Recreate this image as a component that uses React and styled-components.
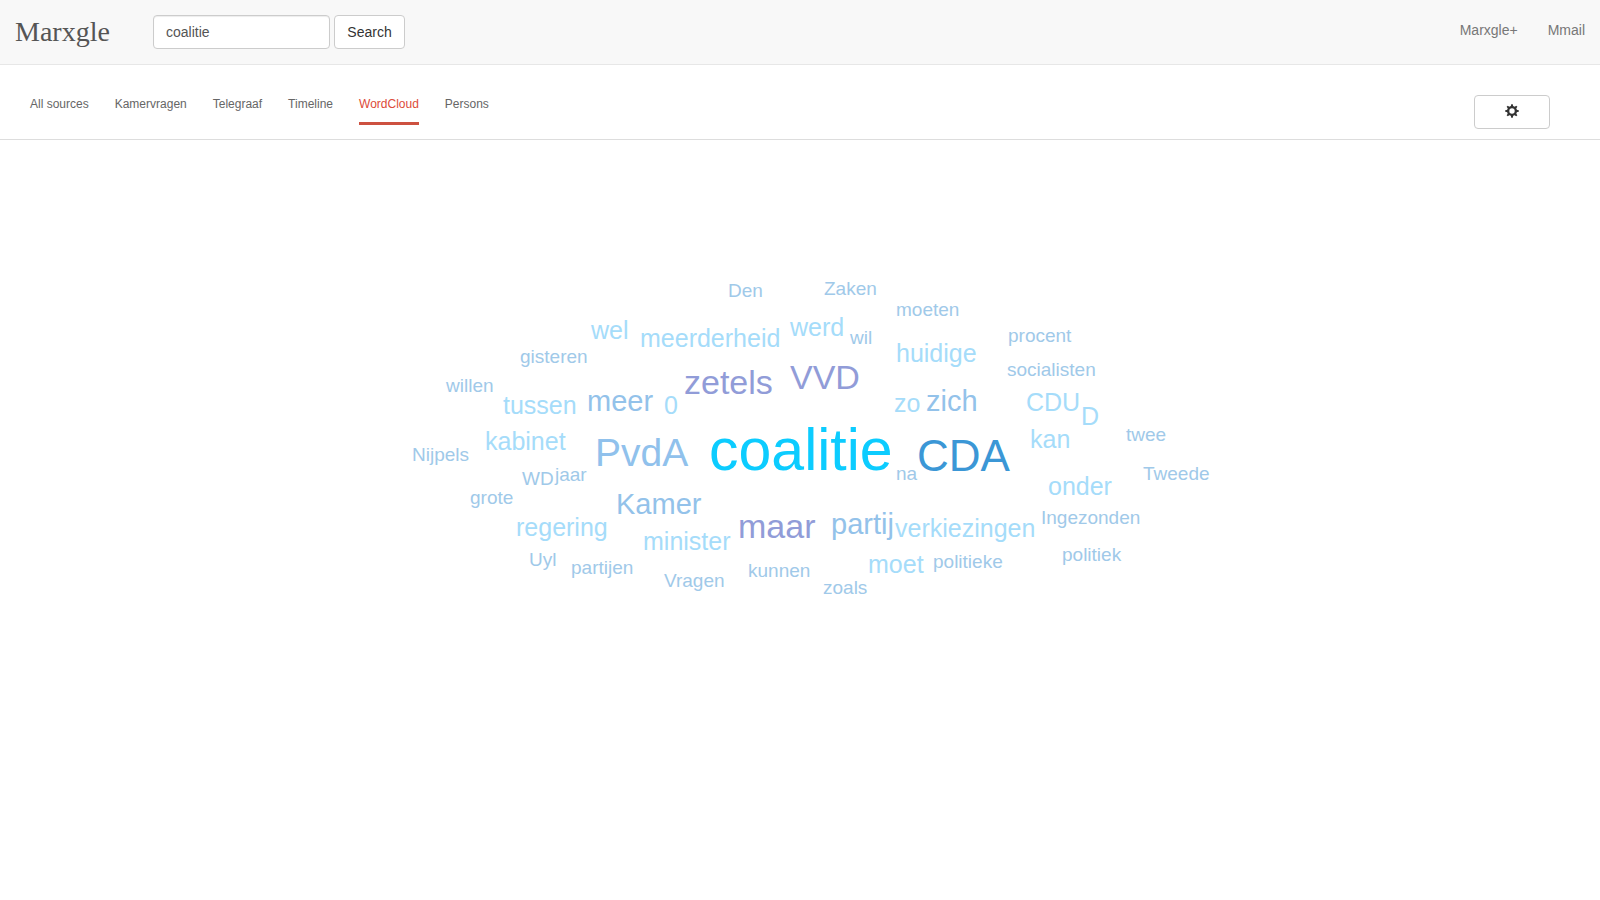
import React from "react";
import styled, { createGlobalStyle } from "styled-components";

const GlobalStyle = createGlobalStyle`
  *, *::before, *::after { box-sizing: border-box; }
  body {
    margin: 0;
    background: #fff;
    color: #333;
    font: 14px/20px "Liberation Sans", Arial, sans-serif;
  }
`;

const Navbar = styled.header`
  display: flex;
  align-items: center;
  height: 65px;
  padding: 0 15px;
  background: #f8f8f8;
  border-bottom: 1px solid #e7e7e7;
`;

const Brand = styled.a`
  width: 138px;
  font: 28px/32px "Liberation Serif", "Times New Roman", serif;
  color: #555;
  text-decoration: none;
`;

const SearchForm = styled.form`
  display: flex;
  gap: 4px;
`;

const SearchInput = styled.input`
  width: 177px;
  height: 34px;
  padding: 6px 12px;
  font: inherit;
  color: #555;
  background: #fff;
  border: 1px solid #ccc;
  border-radius: 4px;
  box-shadow: inset 0 1px 1px rgba(0, 0, 0, 0.075);
`;

const Button = styled.button`
  display: flex;
  align-items: center;
  justify-content: center;
  height: 34px;
  min-width: ${(p) => (p.$wide ? "76px" : "71px")};
  padding: 6px 12px;
  font: inherit;
  color: #333;
  background: #fff;
  border: 1px solid #ccc;
  border-radius: 4px;
  cursor: pointer;
`;

const AppLinks = styled.nav`
  display: flex;
  gap: 30px;
  margin-left: auto;
  padding-bottom: 4px;
`;

const AppLink = styled.a`
  color: #777;
  text-decoration: none;
`;

const Toolbar = styled.div`
  display: flex;
  align-items: flex-start;
  justify-content: space-between;
  height: 75px;
  padding: 30px 50px 0 30px;
  border-bottom: 1px solid #ddd;
`;

const Tabs = styled.nav`
  display: flex;
  gap: 26px;
`;

const Tab = styled.a`
  height: 30px;
  padding-top: 1px;
  font-size: 12px;
  line-height: 16px;
  color: ${(p) => (p.$active ? "#dd4b39" : "#666")};
  border-bottom: 3px solid ${(p) => (p.$active ? "#cd5140" : "transparent")};
  text-decoration: none;
`;

const Stage = styled.main`
  display: flex;
  justify-content: center;
  padding: 130px 0;
`;

const Cloud = styled.div`
  position: relative;
  flex: none;
  width: 840px;
  height: 340px;
`;

const levels = {
  1: { size: 19, ascent: 16, color: "#a0c9e9" },
  2: { size: 25, ascent: 21, color: "#a5dcfa" },
  3: { size: 29, ascent: 24, color: "#93c2ea" },
  4: { size: 34, ascent: 29, color: "#919cd8" },
  5: { size: 39, ascent: 33, color: "#90c1ec" },
  6: { size: 44, ascent: 37, color: "#3b97d6" },
  7: { size: 59, ascent: 49, color: "#0cccff" },
};

const Word = styled.span`
  position: absolute;
  font-size: ${(p) => levels[p.$level].size}px;
  line-height: 1;
  white-space: nowrap;
  color: ${(p) => levels[p.$level].color};
`;

/* [text, level, left edge, baseline], measured inside the cloud */
const words = [
  ["coalitie", 7, 329, 200],
  ["CDA", 6, 537, 201],
  ["PvdA", 5, 215, 196],
  ["zetels", 4, 304, 124],
  ["VVD", 4, 410, 119],
  ["maar", 4, 358, 268],
  ["meer", 3, 207, 141],
  ["zich", 3, 546, 141],
  ["Kamer", 3, 236, 244],
  ["partij", 3, 451, 264],
  ["wel", 2, 211, 69],
  ["meerderheid", 2, 260, 77],
  ["werd", 2, 410, 66],
  ["huidige", 2, 516, 92],
  ["tussen", 2, 123, 144],
  ["0", 2, 284, 144],
  ["zo", 2, 514, 142],
  ["CDU", 2, 646, 141],
  ["D", 2, 701, 155],
  ["kan", 2, 650, 178],
  ["kabinet", 2, 105, 180],
  ["onder", 2, 668, 225],
  ["regering", 2, 136, 266],
  ["minister", 2, 263, 280],
  ["verkiezingen", 2, 515, 267],
  ["moet", 2, 488, 303],
  ["Den", 1, 348, 27],
  ["Zaken", 1, 444, 25],
  ["moeten", 1, 516, 46],
  ["wil", 1, 470, 74],
  ["procent", 1, 628, 72],
  ["socialisten", 1, 627, 106],
  ["gisteren", 1, 140, 93],
  ["willen", 1, 66, 122],
  ["Nijpels", 1, 32, 191],
  ["WD", 1, 142, 215],
  ["jaar", 1, 175, 211],
  ["grote", 1, 90, 234],
  ["Uyl", 1, 149, 296],
  ["partijen", 1, 191, 304],
  ["Vragen", 1, 284, 317],
  ["kunnen", 1, 368, 307],
  ["zoals", 1, 443, 324],
  ["politieke", 1, 553, 298],
  ["politiek", 1, 682, 291],
  ["Ingezonden", 1, 661, 254],
  ["Tweede", 1, 763, 210],
  ["twee", 1, 746, 171],
  ["na", 1, 516, 210],
];

const tabs = ["All sources", "Kamervragen", "Telegraaf", "Timeline", "WordCloud", "Persons"];

const Cog = styled.svg`
  display: block;
  margin-bottom: 2px;
`;

function CogIcon() {
  return (
    <Cog width="14" height="14" viewBox="0 0 14 14" aria-hidden="true">
      <g fill="#333">
        {[0, 45, 90, 135].map((angle) => (
          <path key={angle} d="M5.8 2.6 6.2.2h1.6l.4 2.4v8.8l-.4 2.4H6.2l-.4-2.4z" transform={`rotate(${angle} 7 7)`} />
        ))}
        <circle cx="7" cy="7" r="5" />
      </g>
      <circle cx="7" cy="7" r="2.7" fill="#fff" />
    </Cog>
  );
}

export default function App() {
  return (
    <>
      <GlobalStyle />
      <Navbar>
        <Brand href="#">Marxgle</Brand>
        <SearchForm role="search" onSubmit={(e) => e.preventDefault()}>
          <SearchInput type="text" aria-label="Search terms" defaultValue="coalitie" />
          <Button type="submit">Search</Button>
        </SearchForm>
        <AppLinks>
          <AppLink href="#">Marxgle+</AppLink>
          <AppLink href="#">Mmail</AppLink>
        </AppLinks>
      </Navbar>
      <Toolbar>
        <Tabs>
          {tabs.map((tab) => (
            <Tab key={tab} href="#" $active={tab === "WordCloud"}>
              {tab}
            </Tab>
          ))}
        </Tabs>
        <Button type="button" $wide aria-label="Settings">
          <CogIcon />
        </Button>
      </Toolbar>
      <Stage>
        <Cloud>
          {words.map(([text, level, x, baseline]) => (
            <Word key={text} $level={level} style={{ left: x, top: baseline - levels[level].ascent }}>
              {text}
            </Word>
          ))}
        </Cloud>
      </Stage>
    </>
  );
}
